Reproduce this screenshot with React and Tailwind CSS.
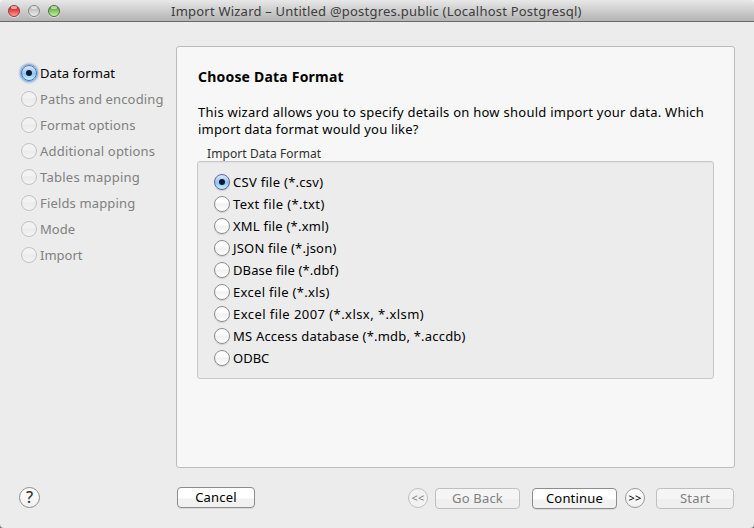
import React from "react";

const steps = [
  { label: "Data format", tracking: "tracking-[0.1px]" },
  { label: "Paths and encoding", tracking: "tracking-[0.14px]" },
  { label: "Format options", tracking: "tracking-[0.14px]" },
  { label: "Additional options", tracking: "tracking-[0.2px]" },
  { label: "Tables mapping", tracking: "tracking-[0.25px]" },
  { label: "Fields mapping", tracking: "tracking-[0.15px]" },
  { label: "Mode", tracking: "tracking-[0px]" },
  { label: "Import", tracking: "tracking-[0px]" },
];

const formats = [
  { label: "CSV file (*.csv)", tracking: "tracking-[0.28px]" },
  { label: "Text file (*.txt)", tracking: "tracking-[0.4px]" },
  { label: "XML file (*.xml)", tracking: "tracking-[0.22px]" },
  { label: "JSON file (*.json)", tracking: "tracking-[0.2px]" },
  { label: "DBase file (*.dbf)", tracking: "tracking-[0.12px]" },
  { label: "Excel file (*.xls)", tracking: "tracking-[0.32px]" },
  { label: "Excel file 2007 (*.xlsx, *.xlsm)", tracking: "tracking-[0.44px]" },
  { label: "MS Access database (*.mdb, *.accdb)", tracking: "tracking-[0.2px]" },
  { label: "ODBC", tracking: "tracking-[0px]" },
];

function Radio({ checked, disabled, focused }) {
  let look = "border-[#8d8d8d] bg-linear-to-b from-white from-40% via-[#f0f0f0] via-50% to-white shadow-[0_1px_1px_rgba(0,0,0,0.12)]";
  if (disabled) look = "border-[#c2c2c2] bg-linear-to-b from-[#f2f2f2] from-40% via-[#ebebeb] via-50% to-[#f4f4f4]";
  if (checked) look = "border-[#5d62a0] bg-linear-to-b from-[#dfe9f8] via-[#93c2ef] via-55% to-[#c4f0ff] shadow-[0_1px_1px_rgba(0,0,0,0.15)]";
  if (focused) look = "border-[#4a74b4] bg-linear-to-b from-[#dfe9f8] via-[#93c2ef] via-55% to-[#c4f0ff] shadow-[0_0_2px_1.5px_rgba(99,151,211,0.8)]";
  return (
    <span className={"flex h-4 w-4 shrink-0 items-center justify-center rounded-full border " + look}>
      {checked && <span className="h-[6px] w-[6px] rounded-full bg-[#0c1a33]" />}
    </span>
  );
}

function Light({ look }) {
  return (
    <span className={"flex h-3 w-3 justify-center rounded-full border shadow-[0_1px_0_rgba(255,255,255,0.5)] " + look}>
      <span className="h-[3px] w-[6px] rounded-full bg-white/55" />
    </span>
  );
}

function Button({ children, className, disabled }) {
  return (
    <button
      className={
        "flex h-[21px] items-center justify-center rounded-[4px] border pb-px text-[13px] tracking-[0.2px] " +
        (disabled
          ? "border-[#bfbfbf] bg-linear-to-b from-[#f5f5f5] from-50% to-[#efefef] to-50% text-[#808080] "
          : "border-[#8c8c8c] bg-linear-to-b from-white from-50% to-[#f1f1f1] to-60% text-black shadow-[0_1px_0_rgba(0,0,0,0.08)] ") +
        className
      }
    >
      {children}
    </button>
  );
}

export default function App() {
  return (
    <div className="h-[528px] w-[754px] bg-[#8a8a8a] bg-linear-to-b from-[#f4f4f4] from-50% to-[#7a7a7a] to-50%">
      <div className="flex h-[528px] w-[754px] flex-col overflow-hidden rounded-[4px] bg-[#ececec] font-['Noto_Sans','Lucida_Grande',sans-serif] text-[13px] leading-4 whitespace-nowrap text-black">
        <header className="flex h-[22px] shrink-0 items-center border-b border-[#6a6a6a] bg-linear-to-b from-[#e8e8e8] to-[#b3b3b3] pl-2">
          <div className="flex w-[163px] gap-2">
            <Light look="border-[#8f3a3a] bg-linear-to-b from-[#b8292b] via-[#ee4a4c] to-[#ff9c98]" />
            <Light look="border-[#858585] bg-linear-to-b from-[#ababab] via-[#cecece] to-[#ececec]" />
            <Light look="border-[#4a6f3b] bg-linear-to-b from-[#4f8f38] via-[#86c866] to-[#c4f5a2]" />
          </div>
          <h1 className="text-[13px] leading-4 tracking-[0.22px] text-[#3c3c3c]">
            Import Wizard – Untitled @postgres.public (Localhost Postgresql)
          </h1>
        </header>

        <div className="flex h-[446px] shrink-0">
          <nav className="flex w-44 shrink-0 flex-col gap-[10px] pt-[43px] pl-[21px]">
            {steps.map((s, i) => (
              <div key={s.label} className="flex h-4 items-center gap-[3px]">
                <Radio checked={i === 0} focused={i === 0} disabled={i !== 0} />
                <span className={(i === 0 ? "text-black " : "text-[#808080] ") + s.tracking}>{s.label}</span>
              </div>
            ))}
          </nav>

          <main className="mt-6 h-[422px] w-[559px] rounded-[3px] border border-[#bcbcbc] bg-[#f7f7f7] pt-[22px] pl-5">
            <h2 className="pl-px text-[14px] leading-4 font-bold tracking-[0.2px]">Choose Data Format</h2>
            <p className="mt-[19px] pl-px leading-[17px] tracking-[0.26px]">
              This wizard allows you to specify details on how should import your data. Which
              <br />
              <span className="tracking-[0.19px]">import data format would you like?</span>
            </p>
            <div className="mt-[7px] h-4 pl-[10px] text-[12px] leading-[17px] tracking-[0.08px] text-[#303030]">
              Import Data Format
            </div>
            <section className="flex h-[218px] w-[517px] flex-col gap-[6px] rounded-[3px] border border-[#c8c8c8] bg-[#ececec] pt-3 pl-4 shadow-[inset_0_1px_1px_rgba(0,0,0,0.04)]">
              {formats.map((f, i) => (
                <div key={f.label} className="flex h-4 items-center gap-[3px]">
                  <Radio checked={i === 0} />
                  <span className={f.tracking}>{f.label}</span>
                </div>
              ))}
            </section>
          </main>
        </div>

        <footer className="flex items-start pt-[19px] pl-[19px]">
          <button className="flex h-[21px] w-[21px] items-center justify-center rounded-full border border-[#8c8c8c] bg-linear-to-b from-white to-[#f1f1f1] pb-px text-[16px] font-medium text-[#333]">
            ?
          </button>
          <Button className="ml-[137px] w-[78px]">Cancel</Button>
          <div className="mt-px ml-[153px] flex">
            <button className="flex h-5 w-5 items-center justify-center rounded-full border border-[#c0c0c0] bg-[#f2f2f2] text-[11px] tracking-[0.3px] text-[#808080]">
              &lt;&lt;
            </button>
            <Button disabled className="ml-[7px] w-[85px]">Go Back</Button>
            <Button className="ml-3 w-[85px]">Continue</Button>
            <button className="ml-2 flex h-5 w-5 items-center justify-center rounded-full border border-[#999] bg-linear-to-b from-white to-[#f1f1f1] text-[11px] tracking-[0.3px] text-black">
              &gt;&gt;
            </button>
            <Button disabled className="ml-[11px] w-[78px]">Start</Button>
          </div>
        </footer>
      </div>
    </div>
  );
}
